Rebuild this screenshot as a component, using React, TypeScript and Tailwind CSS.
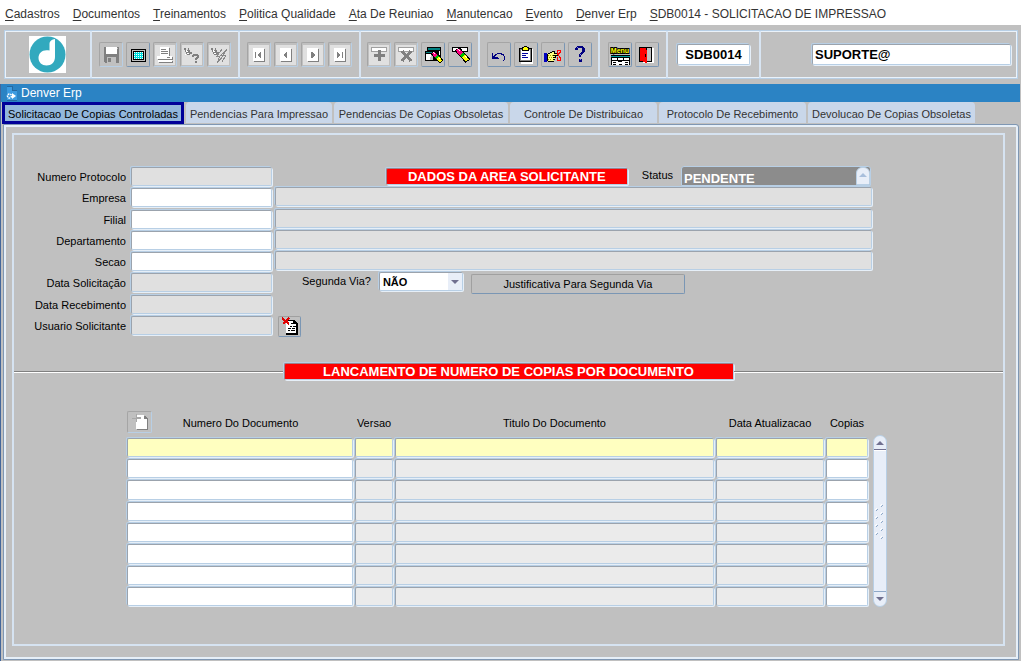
import { useState } from "react";
import type { ReactNode } from "react";
import clsx from "clsx";

const menus = ["Cadastros", "Documentos", "Treinamentos", "Politica Qualidade", "Ata De Reuniao", "Manutencao", "Evento", "Denver Erp", "SDB0014 - SOLICITACAO DE IMPRESSAO"];

const tabs = [
  { name: "Solicitacao De Copias Controladas", width: "w-[182px]" },
  { name: "Pendencias Para Impressao", width: "w-[146px]" },
  { name: "Pendencias De Copias Obsoletas", width: "w-[174px]" },
  { name: "Controle De Distribuicao", width: "w-[147px]" },
  { name: "Protocolo De Recebimento", width: "w-[147px]" },
  { name: "Devolucao De Copias Obsoletas", width: "w-[167px]" },
];

const field =
  "block rounded-[2px] border border-t-[#9ba3ad] border-l-[#9ba3ad] border-r-[#b8cfe5] border-b-[#b8cfe5] px-1 outline-none shadow-[-1px_-1px_0_#b8cfe5,1px_1px_0_#e6eff8]";

const columns = [
  { name: "Numero Do Documento", width: "w-[228px]", open: true },
  { name: "Versao", width: "w-[40px]", open: false },
  { name: "Titulo Do Documento", width: "w-[321px]", open: false },
  { name: "Data Atualizacao", width: "w-[110px]", open: false },
  { name: "Copias", width: "w-[44px]", open: true },
];

function ToolButton({ label, off, children }: { label: string; off?: boolean; children: ReactNode }) {
  return (
    <button
      aria-label={label}
      className={clsx(
        "flex h-[25px] w-6 items-center justify-center rounded-[2px] border border-t-[#a5a5a5] border-l-[#a5a5a5]",
        off ? "border-r-[#b8cfe5] border-b-[#b8cfe5]" : "border-r-[#7a96b4] border-b-[#7a96b4]"
      )}
    >
      <svg width="20" height="20" viewBox="0 0 20 20" shapeRendering="crispEdges">
        {children}
      </svg>
    </button>
  );
}

function ToolGroup({ width, children }: { width: string; children: ReactNode }) {
  return <div className={clsx("flex shrink-0 items-center justify-center gap-[3px] border-r-2 border-[#d8e5f3]", width)}>{children}</div>;
}

function NavPage({ d }: { d: string }) {
  return (
    <>
      <path fill="#e0e0e0" d="M0 0h20v20H0z" />
      <path fill="#808080" d="M5 4h11v13H5z" />
      <path fill="#fff" d="M4 3h11v13H4z" />
      <path fill="#808080" d={d} />
    </>
  );
}

function Eraser() {
  return (
    <>
      <path d="M7 4l11 12" stroke="#000" strokeWidth="6" />
      <path d="M7.500 4.500l4 4.500" stroke="#ff0080" strokeWidth="4" />
      <path d="M11.500 9l2 2" stroke="#00c000" strokeWidth="4" />
      <path d="M13.500 11l4 4.500" stroke="#ffff00" strokeWidth="4" />
      <path d="M8 4h1v1h1v1H9V5H8zM15 11h1v1h1v1h-1v-1h-1z" fill="#fff" />
    </>
  );
}

function Banner({ text, width }: { text: string; width: string }) {
  return (
    <h2
      className={clsx(
        "flex h-[17px] shrink-0 items-center justify-center rounded-[2px] border border-t-[#a08088] border-l-[#a08088] border-r-[#b8cfe5] border-b-[#b8cfe5] bg-[#ff0000] text-[13px] leading-[16px] font-bold text-white shadow-[-1px_-1px_0_#b8cfe5,1px_1px_0_#e6eff8]",
        width
      )}
    >
      {text}
    </h2>
  );
}

function FormRow({ id, label, open, children }: { id: string; label: string; open?: boolean; children?: ReactNode }) {
  return (
    <>
      <label htmlFor={id} className="pt-1 pr-[4px] text-right leading-[14px]">
        {label}
      </label>
      <input id={id} readOnly={!open} className={clsx(field, "mt-px ml-px h-[19px] w-[141px]", open ? "bg-white" : "bg-[#e0e0e0]")} />
      <div className="min-w-0">{children}</div>
    </>
  );
}

function Description({ label }: { label: string }) {
  return <input aria-label={label} readOnly className={clsx(field, "ml-px h-[19px] w-full bg-[#e0e0e0]")} />;
}

export default function App() {
  const [active, setActive] = useState(0);

  return (
    <div className="flex min-h-screen flex-col bg-[#c0c0c0] font-['Liberation_Sans',Arial,sans-serif] text-[11px] text-black">
      <nav className="flex h-[25px] items-center gap-[13px] bg-white px-[5px] pt-[3px] text-[12px] whitespace-nowrap text-[#333]">
        {menus.map((m) => (
          <a href="#" key={m}>
            <span className="underline underline-offset-2">{m[0]}</span>
            {m.slice(1)}
          </a>
        ))}
      </nav>

      <header className="mx-[3px] mt-[5px] mb-[5px] ml-1 flex h-[49px] border border-[#b8cfe5] shadow-[inset_0_0_0_1px_#eaf2fa]">
        <div className="flex w-[87px] shrink-0 items-center justify-center border-r-2 border-[#d8e5f3]">
          <svg width="37" height="37" viewBox="0 0 37 37" role="img" aria-label="Denver">
            <path fill="#fff" d="M0 0h37v37H0z" />
            <circle cx="18.500" cy="18.500" r="18" fill="#32a9be" />
            <path fill="#fff" d="M26 3 C23 3.500 20.500 5 20.500 8 V14.500 C14 13 9.500 16.500 9.500 22 C10.500 20.500 12 20 13.500 21 C14.500 22 14 24 15.500 25 C18 26 20.500 24 20.500 21 C20.500 19 19 17.800 17 18 C15.500 18 14.500 19 14 20 C12 18.500 9.500 20 9.500 22 C9.500 26.500 13 29.500 17.500 29.500 C22.500 29.500 26 26 26 21z" />
          </svg>
        </div>

        <ToolGroup width="w-[148px]">
          <ToolButton label="Salvar" off>
            <path fill="#808080" d="M3 2h15v16H4v-1H3z" />
            <path fill="#fff" d="M5 2h11v7H5z" />
            <path fill="#c0c0c0" d="M6 12h9v6H6zM16 3h1v1h-1z" />
            <path fill="#808080" d="M7 13h3v4H7z" />
          </ToolButton>
          <ToolButton label="Tela">
            <path d="M3 4h15v13H3z" fill="#000" />
            <path d="M4 5h13v11H4z" fill="#c0c0c0" />
            <path d="M5 6h11v9H5z" fill="#000" />
            <path d="M6 7h9v7H6z" fill="#00e0e0" />
            <path d="M6 7.500h9M6 9.500h9M6 11.500h9M6 13.500h9" stroke="#fff" strokeDasharray="1 1" />
          </ToolButton>
          <ToolButton label="Imprimir" off>
            <path fill="#e0e0e0" d="M0 0h20v20H0z" />
            <path fill="#808080" d="M5 3h10v8H5zM3 12h15v3H3zM4 16h14v2H4z" />
            <path fill="#fff" d="M5 2h9v9H5zM2 11h15v3H2zM3 15h14v2H3z" />
            <path fill="#808080" d="M6 4h5v1H6zM6 6h7v1H6zM6 8h7v1H6zM3 14h13v1H3zM12 12h3v1h-3z" />
          </ToolButton>
          <ToolButton label="Entrar consulta" off>
            <path fill="#e0e0e0" d="M0 0h20v20H0z" />
            <path fill="#808080" d="M2 3h2v2h2V3h1v2h1v2h2v2H8v1H5V9H4V7H3V5H2z" />
            <path fill="#808080" d="M10 10h1V9h5v1h1v3h-1v1h-1v1h-2v-2h1v-1h1v-1h-3v1h-2zM13 16h2v2h-2z" />
            <path fill="#fff" d="M4 5h1v1h1v1H5v1h2v1H5V7H4zM3 9h1v1H3z" />
          </ToolButton>
          <ToolButton label="Executar consulta" off>
            <path fill="#e0e0e0" d="M0 0h20v20H0z" />
            <path fill="#808080" d="M2 3h2v2h2V3h1v2h1v2h2v2H8v1H5V9H4V7H3V5H2z" />
            <path d="M13 4l-5 7h3l-3 7 7-8h-3l5-5M18 4l-4 6h3l-4 7" fill="none" stroke="#888" />
            <path fill="#fff" d="M4 5h1v1h1v1H5v1h2v1H5V7H4z" />
          </ToolButton>
        </ToolGroup>

        <ToolGroup width="w-[121px]">
          <ToolButton label="Primeiro" off>
            <NavPage d="M6 7h1v6H6zM11 7h1v6h-1v-1h-1v-1H9v-2h1V8h1z" />
          </ToolButton>
          <ToolButton label="Anterior" off>
            <NavPage d="M10 7h1v6h-1v-1H9v-1H8v-2h1V8h1z" />
          </ToolButton>
          <ToolButton label="Proximo" off>
            <NavPage d="M8 7h2v1h1v1h1v2h-1v1h-1v1H8z" />
          </ToolButton>
          <ToolButton label="Ultimo" off>
            <NavPage d="M7 7h1v1h1v1h1v2H9v1H8v1H7zM12 7h1v6h-1z" />
          </ToolButton>
        </ToolGroup>

        <ToolGroup width="w-[119px]">
          <ToolButton label="Inserir registro" off>
            <path fill="#e0e0e0" d="M0 0h20v20H0z" />
            <path fill="#a0a0a0" d="M2 2h16v5H2z" />
            <path fill="#fff" d="M3 3h14v3H3z" />
            <path fill="#808080" d="M9 5h3v4h4v3h-4v4H9v-4H5V9h4z" />
          </ToolButton>
          <ToolButton label="Excluir registro" off>
            <path fill="#e0e0e0" d="M0 0h20v20H0z" />
            <path fill="#a0a0a0" d="M2 2h16v5H2z" />
            <path fill="#fff" d="M3 3h14v3H3z" />
            <path d="M6 6l9 10M15 6L6 16" stroke="#808080" strokeWidth="3" />
          </ToolButton>
          <ToolButton label="Limpar tela">
            <path fill="#000" d="M4 2h14v13H4zM2 6h14v10H2z" />
            <path fill="#008080" d="M5 3h12v2H5zM3 7h9v1H3z" />
            <path fill="#fff" d="M3 9h5v6H3zM16 6h1v4h-1z" />
            <path fill="#c0c0c0" d="M8 9h2v6H7v-3h1z" />
            <g transform="translate(4 4) scale(.8)">
              <Eraser />
            </g>
          </ToolButton>
          <ToolButton label="Limpar registro">
            <path fill="#000" d="M2 2h16v5H2z" />
            <path fill="#fff" d="M3 3h14v3H3z" />
            <Eraser />
          </ToolButton>
        </ToolGroup>

        <ToolGroup width="w-[120px]">
          <ToolButton label="Desfazer">
            <path fill="#000080" d="M3 8h1v3h1v-1h1V9h2V8h5v1h2v2h1v4h-1v1h-1v-1h1v-4h-1v-1h-2V9H8v1H7v1H6v1h3v1h1v1H3z" />
          </ToolButton>
          <ToolButton label="Lista de valores">
            <path fill="#fff" d="M5 4h12v15H5z" />
            <path fill="#000" d="M3 3h13v14H3z" />
            <path fill="#808080" d="M4 4h11v12H4z" />
            <path fill="#fff" d="M5 5h9v10H5z" />
            <path fill="#000" d="M6 2h2V1h3v1h2v4H6z" />
            <path fill="#ffff00" d="M7 3h1V2h3v1h1v2H7z" />
            <path fill="#0000a0" d="M6 8h6v1H6zM6 10h4v1H6zM6 12h6v1H6z" />
          </ToolButton>
          <ToolButton label="Editar">
            <path fill="#0000c0" d="M1 8h3v9H1z" />
            <path fill="#000" d="M4 9h1V8h2V7h2V6h3v2h4v3h-3v2h-1v2h-1v2H5v-1H4z" />
            <path fill="#ffff80" d="M5 9h2V8h2V7h2v2h4v1h-5v1h2v1h-2v1h2v1h-2v1h1v1H5z" />
            <path d="M5 10.500h5M6 12.500h4M5 14.500h4" stroke="#a0a000" strokeDasharray="1 1" />
            <path d="M15 8.500h-1V5.500h3v2l-2 2 2 3v3h-3v-3h1" fill="none" stroke="#ff0000" />
          </ToolButton>
          <ToolButton label="Ajuda">
            <path fill="#000080" d="M7 1h6v1h1v1h1v4h-1v1h-1v1h-1v1h-1v2H9v-3h1V8h1V7h1V3H8v2H5V3h1V2h1zM9 14h3v3H9z" />
            <path fill="#8080e0" d="M7 2h1v1H7zM10 9h1v1h-1zM10 14h1v1h-1z" />
          </ToolButton>
        </ToolGroup>

        <ToolGroup width="w-[68px]">
          <ToolButton label="Menu">
            <text x="10" y="8" textAnchor="middle" fontSize="7" fontWeight="bold" fill="#ffff00" stroke="#000" strokeWidth="2" paintOrder="stroke">
              Menu
            </text>
            <path fill="#000" d="M1 10h19v1H1z" />
            <path fill="#00a0a0" d="M1 11h19v1H1z" />
            <path fill="#000" d="M1 12h19v8H1z" />
            <path fill="#fff" d="M2 13h5v2H2zM8 13h5v2H8zM14 13h5v2h-5zM2 16h17v4H2z" />
            <path fill="#000" d="M3 17h3v1H3zM8 16h4v1H8zM15 17h3v1h-3zM3 19h3v1H3zM9 19h3v1H9zM15 19h3v1h-3z" />
          </ToolButton>
          <ToolButton label="Sair">
            <path fill="#fff" d="M15 3h2v15H6v-1h9z" />
            <path fill="#000" d="M2 2h13v15H2z" />
            <path fill="#c0c0c0" d="M10 3h4v13h-4z" />
            <path fill="#ff0000" d="M3 3h6v2h1v13H8v-1H6v-1H3z" />
            <path fill="#000" d="M8 9h1v3H8z" />
          </ToolButton>
        </ToolGroup>

        <div className="flex w-[93px] shrink-0 items-center justify-center border-r-2 border-[#d8e5f3]">
          <input aria-label="Programa" readOnly defaultValue="SDB0014" className={clsx(field, "h-[21px] w-[73px] bg-white text-center text-[13px] font-bold")} />
        </div>
        <div className="flex flex-1 items-center pr-[6px] pl-[51px]">
          <input aria-label="Usuario" readOnly defaultValue="SUPORTE@" className={clsx(field, "h-[21px] w-full bg-white px-[2px] text-[13px] font-bold")} />
        </div>
      </header>

      <main className="flex flex-1 flex-col border-l border-[#44679b]">
        <div className="mr-px flex h-[18px] items-center gap-1 bg-[#2b83c4] pl-[5px]">
          <svg width="11" height="15" viewBox="0 0 11 15" aria-hidden="true">
            <path fill="#2568a0" d="M1 0h6v4h4v11H1z" />
            <path fill="#3d9be0" d="M1 1h5v4h5v9H1z" />
            <circle cx="3.500" cy="10" r="2" fill="none" stroke="#fff" strokeDasharray="1.500 .8" strokeWidth="1.500" />
            <path fill="#fff" d="M6 7l4 3-4 3z" />
          </svg>
          <h1 className="text-[12px] text-white">Denver Erp</h1>
        </div>

        <div role="tablist" className="ml-px flex h-[22px] gap-[2px]">
          {tabs.map((t, i) => (
            <button
              key={t.name}
              role="tab"
              aria-selected={i === active}
              onClick={() => setActive(i)}
              className={clsx(
                "shrink-0 text-center whitespace-nowrap",
                t.width,
                i === active ? "border-[3px] border-[#000099] bg-[#93b7dc] pt-px text-black" : "mb-px rounded-t-[4px] bg-[#c9d7ea] pt-[3px] text-[#333]"
              )}
            >
              {t.name}
            </button>
          ))}
        </div>

        <section className="mr-[2px] mb-px ml-[2px] flex-1 rounded-tr-[3px] border border-[#7f97b3] p-[8px] pr-[13px] pb-[13px] shadow-[inset_0_0_0_2px_#e6eff8]">
          <div className="border-2 border-[#d6e3f1] pb-[37px]">
            <div className="mt-[31px] mr-[132px] grid h-[170px] grid-cols-[116px_144px_1fr] grid-rows-8">
              <FormRow id="protocolo" label="Numero Protocolo">
                <div className="flex items-start justify-end">
                  <div className="pt-[2px]">
                    <Banner text="DADOS DA AREA SOLICITANTE" width="w-[242px]" />
                  </div>
                  <label htmlFor="status" className="px-[8px] pt-[2px] pl-[14px] leading-[14px]">
                    Status
                  </label>
                  <div className="flex h-5 w-[190px] overflow-hidden rounded-t-[3px] border border-[#b8cfe5] bg-[#8c8c8c]">
                    <input id="status" readOnly defaultValue="PENDENTE" className="min-w-0 flex-1 bg-transparent pt-[5px] pl-[2px] text-[13px] leading-[15px] font-bold text-white outline-none" />
                    <button aria-label="Subir" className="flex w-[14px] justify-center rounded-t-[6px] border border-[#b8cfe5] bg-[#e8eef8] pt-[5px]">
                      <svg width="8" height="4" viewBox="0 0 8 4">
                        <path fill="#a9bfdc" d="M4 0l4 4H0z" />
                      </svg>
                    </button>
                  </div>
                </div>
              </FormRow>
              <FormRow id="empresa" label="Empresa" open>
                <Description label="Nome da empresa" />
              </FormRow>
              <FormRow id="filial" label="Filial" open>
                <Description label="Nome da filial" />
              </FormRow>
              <FormRow id="departamento" label="Departamento" open>
                <Description label="Nome do departamento" />
              </FormRow>
              <FormRow id="secao" label="Secao" open>
                <Description label="Nome da secao" />
              </FormRow>
              <FormRow id="solicitacao" label="Data Solicitação">
                <div className="flex items-start pl-[28px]">
                  <label htmlFor="segunda" className="pt-[2px] pr-[8px] leading-[14px]">
                    Segunda Via?
                  </label>
                  <div className="relative">
                    <select id="segunda" defaultValue="NÃO" className={clsx(field, "h-[19px] w-[84px] appearance-none bg-white px-[3px] text-[11px] leading-[16px] font-bold")}>
                      <option>NÃO</option>
                      <option>SIM</option>
                    </select>
                    <span className="pointer-events-none absolute top-px right-px flex h-[17px] w-[14px] items-center justify-center bg-[#e8eef8]">
                      <svg width="8" height="4" viewBox="0 0 8 4">
                        <path fill="#707090" d="M0 0h8L4 4z" />
                      </svg>
                    </span>
                  </div>
                  <button className="mt-[2px] ml-[8px] h-5 w-[214px] rounded-[2px] border border-t-[#a0a0a0] border-l-[#a0a0a0] border-r-[#7a96b4] border-b-[#7a96b4]">
                    Justificativa Para Segunda Via
                  </button>
                </div>
              </FormRow>
              <FormRow id="recebimento" label="Data Recebimento" />
              <FormRow id="usuario" label="Usuario Solicitante">
                <button
                  aria-label="Cancelar documento"
                  className="mt-px ml-1 flex h-[21px] w-[23px] items-center justify-center rounded-[2px] border border-t-[#a0a0a0] border-l-[#a0a0a0] border-r-[#7a96b4] border-b-[#7a96b4]"
                >
                  <svg width="18" height="18" viewBox="0 0 18 18" shapeRendering="crispEdges">
                    <path fill="#000" d="M5 3h9v1h1v1h1v1h1v12H5z" />
                    <path fill="#fff" d="M6 4h6v3h3v9H5V5h1z" />
                    <path fill="#000" d="M10 6h2v1h-2zM9 9h2v1H9zM12 9h3v1h-3zM7 11h3v1H7zM11 11h3v1h-3zM7 13h2v1H7zM10 13h4v1h-4z" />
                    <path d="M1 1l7 6M8 1L2 7" stroke="#e00000" strokeWidth="2" />
                  </svg>
                </button>
              </FormRow>
            </div>

            <div className="mt-[27px] flex items-center">
              <div className="h-[2px] flex-1 border-t border-[#808080] bg-white" />
              <Banner text="LANCAMENTO DE NUMERO DE COPIAS POR DOCUMENTO" width="w-[450px]" />
              <div className="h-[2px] flex-1 border-t border-[#808080] bg-white" />
            </div>

            <div className="mt-[31px] ml-[112px] flex items-end">
              <table className="table-fixed border-separate border-spacing-0">
                <thead>
                  <tr className="h-[26px]">
                    {columns.map((c, i) => (
                      <th key={c.name} className={clsx("p-0 align-top font-normal whitespace-nowrap", c.width)}>
                        {i === 0 ? (
                          <div className="flex items-center">
                            <button
                              aria-label="Novo documento"
                              className="ml-px flex h-[22px] w-[25px] items-center justify-center rounded-[2px] border border-t-[#a5a5a5] border-l-[#a5a5a5] border-r-[#b8cfe5] border-b-[#b8cfe5]"
                            >
                              <svg width="18" height="16" viewBox="0 0 18 16" shapeRendering="crispEdges">
                                <path fill="#808080" d="M6 2h9v1h1v1h1v12H6z" />
                                <path fill="#fff" d="M5 1h8v4h3v10H5z" />
                                <path fill="#a8a8a8" d="M5 0h1v3h4v2H6v3H5V5H1V4h4z" />
                              </svg>
                            </button>
                            <span className="flex-1 pt-[2px] pr-[25px]">{c.name}</span>
                          </div>
                        ) : (
                          <span className="block pt-1">{c.name}</span>
                        )}
                      </th>
                    ))}
                  </tr>
                </thead>
                <tbody>
                  {[0, 1, 2, 3, 4, 5, 6, 7].map((row) => (
                    <tr key={row}>
                      {columns.map((c) => (
                        <td key={c.name} className="p-px">
                          <input
                            aria-label={c.name + " " + (row + 1)}
                            readOnly={!c.open}
                            className={clsx(
                              field,
                              "w-full",
                              row % 3 === 2 ? "h-5" : "h-[19px]",
                              row === 0 ? "bg-[#ffffc0]" : c.open ? "bg-white" : "bg-[#ebebeb]"
                            )}
                          />
                        </td>
                      ))}
                    </tr>
                  ))}
                </tbody>
              </table>

              <div className="ml-1 flex h-[172px] w-[14px] flex-col overflow-hidden rounded-[7px] border border-[#b8cfe5] bg-[#e8eef8]">
                <button aria-label="Linha anterior" className="flex h-[14px] items-center justify-center border-b border-[#707090]">
                  <svg width="8" height="4" viewBox="0 0 8 4">
                    <path fill="#707090" d="M4 0l4 4H0z" />
                  </svg>
                </button>
                <div className="flex flex-1 items-center justify-center border-t border-white">
                  <svg width="10" height="36" viewBox="0 0 10 36">
                    <path d="M6 4l2-2M1 8l2-2M6 12l2-2M1 16l2-2M6 20l2-2M1 24l2-2M6 28l2-2M1 32l2-2M6 36l2-2" stroke="#8fa9c8" />
                    <path d="M5 3l2-2M0 7l2-2M5 11l2-2M0 15l2-2M5 19l2-2M0 23l2-2M5 27l2-2M0 31l2-2M5 35l2-2" stroke="#fff" />
                  </svg>
                </div>
                <button aria-label="Proxima linha" className="flex h-[15px] items-center justify-center border-t border-[#8fa9c8]">
                  <svg width="8" height="4" viewBox="0 0 8 4">
                    <path fill="#707090" d="M0 0h8L4 4z" />
                  </svg>
                </button>
              </div>
            </div>
          </div>
        </section>
      </main>
    </div>
  );
}
